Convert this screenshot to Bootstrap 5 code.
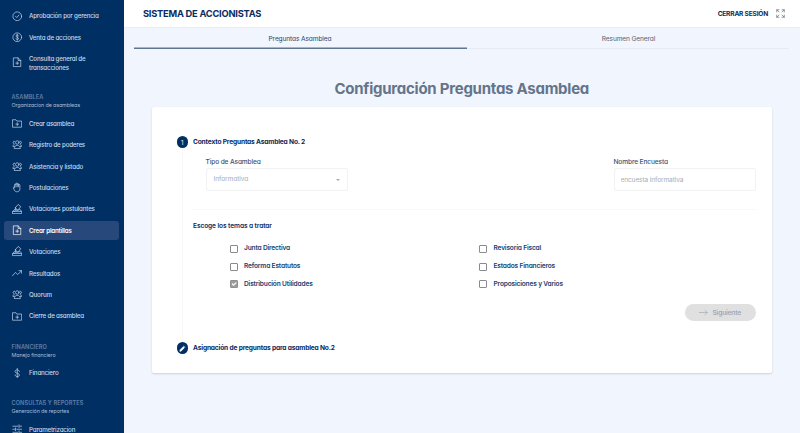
<!DOCTYPE html>
<html lang="es">
<head>
<meta charset="utf-8">
<meta name="viewport" content="width=device-width, initial-scale=1">
<title>Sistema de Accionistas</title>
<link href="https://cdn.jsdelivr.net/npm/bootstrap@5.3.0/dist/css/bootstrap.min.css" rel="stylesheet">
<style>
body{font-family:Inter,"Open Sans",sans-serif;font-feature-settings:"cv11";font-size:6.6px;line-height:9px;color:#0b2d5e;background:#f1f5fd}
svg{fill:none;stroke:currentColor;stroke-width:1.6;stroke-linecap:round;stroke-linejoin:round;flex:none}
.side{width:123.5px;background:#002f64;padding:5.2px 5px 0 4px}
.side .nav-link{height:19.4px;flex:none;margin:1px 0;padding:0 0 0 7.5px;gap:7px;color:#c9d8ea;font-size:6.2px;font-weight:500;border-radius:3px;letter-spacing:-.18px}
.side .nav-link.tall{height:27.2px}
.side .nav-link.active{background:#26487a;color:#fff;font-weight:600;letter-spacing:-.2px}
.side .nav-link svg{width:10.5px;height:10.5px}
.group-head{height:35.5px;padding:16px 0 0 7.5px;font-size:5.4px;line-height:8px;color:#a7bbd3;letter-spacing:-.13px}
.group-head b{display:block;font-size:5.6px;font-weight:600;letter-spacing:.1px;color:#6080a8;line-height:8px}
.topbar{height:28px;background:#fff;border-bottom:1px solid #e9eef4;padding:0 15px 0 19.5px}
.brand{font-size:9.3px;font-weight:700;letter-spacing:-.23px}
.logout{padding-top:1px;font-size:6.6px;font-weight:700;letter-spacing:-.2px}
.tabs{margin:0 0 0 10px;width:655px}
.tabs .nav-link{flex:0 0 322px;height:21px;padding:2px 0 0;font-size:6.6px;letter-spacing:-.12px;color:#566176;border-bottom:1px solid #e6eaf4;border-radius:0}
.tabs .nav-link:not(.active){padding-left:2px}
.tabs .nav-link.active{flex-basis:333px;color:#264575;border-bottom:1px solid #5f7693;box-shadow:inset 0 -.6px #5f7693}
.title{font-size:15px;line-height:20px;font-weight:700;letter-spacing:-.25px;color:#64748b;margin:30px 0 8px}
.panel{margin:0 28px;height:266px;border:0;border-radius:2px;box-shadow:0 1px 2px #c9d1dc;padding:29px 16px 0 25px}
.step{height:12px;gap:5px;font-weight:700;letter-spacing:-.15px;color:#09295a}
.dot{width:11.5px;height:11.5px;border-radius:50%;background:#002f64;color:#fff;font-size:6px;font-weight:400}
.step-body{height:194px;margin-left:5.5px;border-left:1px solid #f8f8fa;padding-left:10px}
.fields{padding:10px 0 0 12.5px}
.field{width:142.5px}
.field label{font-weight:500;letter-spacing:-.13px;color:#3c5377;line-height:9px;display:block}
.field .form-select,.field .form-control{height:23px;min-height:0;margin-top:1px;padding:0 7px;font-size:6.6px;line-height:21px;letter-spacing:-.08px;color:#a9adb4;background-color:#fff;border:1px solid #f1f2f4;border-radius:2px}
.field .form-control{padding-left:6px;letter-spacing:-.13px}
.field .form-select{background-image:none;display:flex;align-items:center;justify-content:space-between}
.caret{border:2px solid transparent;border-top:2.5px solid #a9a9ac;border-bottom:0}
.rule{border-top:1px solid #f8f8fa;margin-top:18px;padding-top:12px}
.ask{font-weight:600;line-height:9px;letter-spacing:-.1px}
.topics{margin-top:9px;padding-left:36.5px}
.topic.form-check{min-height:0;height:17.8px;margin:0;padding:0;gap:6.5px;width:249.5px;font-weight:600;letter-spacing:-.17px;color:#203f70}
.topic .form-check-input{width:8px;height:8px;margin:0;float:none;border:1px solid #8b8b8f;border-radius:1px}
.topic .form-check-input:checked{background-color:#9d9d9d;border-color:#8f8f8f;background-size:8px}
.actions{padding-top:10.5px}
.next{width:71.5px;height:17.5px;border:0;border-radius:9px;padding:0;font-size:6.8px;font-weight:500;letter-spacing:-.2px;gap:4px}
.next:disabled{background:#e0e0e0;color:#9aa2b0;opacity:1}
</style>
</head>
<body class="overflow-hidden">
<svg class="d-none">
<symbol id="people" viewBox="0 0 24 24"><circle cx="12" cy="8" r="4"/><path d="M6 5a3 3 0 0 0-1 6M18 5a3 3 0 0 1 1 6M5 21c0-9 14-9 14 0zM5 13c-2 0-3 2-3 4h3M19 13c2 0 3 2 3 4h-3"/></symbol>
<symbol id="vote" viewBox="0 0 24 24"><path d="M2 17h20v5H2zM2 17l4-5h2M22 17l-3-4h-2M8 8l6-7 6 5-6 8zM8 8l1 6h5M8 14l-2 3"/></symbol>
<symbol id="file" viewBox="0 0 24 24"><path d="M4 2h10l6 6v14H4zM14 2v6h6M12 11v6M9 14h6"/></symbol>
</svg>
<div class="d-flex vh-100">
<nav class="side nav flex-column flex-nowrap flex-shrink-0 overflow-hidden">
<a class="nav-link d-flex align-items-center"><svg viewBox="0 0 24 24"><circle cx="12" cy="12" r="10"/><path d="M8 12l3 3 5-6"/></svg>Aprobación por gerencia</a>
<a class="nav-link d-flex align-items-center"><svg viewBox="0 0 24 24"><circle cx="12" cy="12" r="10"/><path d="M15 9c0-3-6-3-6 0s6 3 6 6-6 3-6 0M12 5v14"/></svg>Venta de acciones</a>
<a class="nav-link tall d-flex align-items-center"><svg viewBox="0 0 24 24"><use href="#file"/></svg><span>Consulta general de<br>transacciones</span></a>
<div class="group-head flex-shrink-0"><b>ASAMBLEA</b>Organizacion de asambleas</div>
<a class="nav-link d-flex align-items-center"><svg viewBox="0 0 24 24"><path d="M2 4h7l2 3h11v14H2zM12 11v6M9 14h6"/></svg>Crear asamblea</a>
<a class="nav-link d-flex align-items-center"><svg viewBox="0 0 24 24"><use href="#people"/></svg>Registro de poderes</a>
<a class="nav-link d-flex align-items-center"><svg viewBox="0 0 24 24"><use href="#people"/></svg>Asistencia y listado</a>
<a class="nav-link d-flex align-items-center"><svg viewBox="0 0 24 24"><path d="M6 12V6c0-2 3-2 3 0V4c0-2 3-2 3 0v1c0-2 3-2 3 0v2c0-2 3-2 3 0v9c0 8-11 8-13 2l-2-5c0-2 2-2 3-1zM9 6v5M12 5v6M15 7v4"/></svg>Postulaciones</a>
<a class="nav-link d-flex align-items-center"><svg viewBox="0 0 24 24"><use href="#vote"/></svg>Votaciones postulantes</a>
<a class="nav-link active d-flex align-items-center"><svg viewBox="0 0 24 24"><use href="#file"/></svg>Crear plantillas</a>
<a class="nav-link d-flex align-items-center"><svg viewBox="0 0 24 24"><use href="#vote"/></svg>Votaciones</a>
<a class="nav-link d-flex align-items-center"><svg viewBox="0 0 24 24"><path d="M1 18l7-8 5 5 9-9M16 6h6v6"/></svg>Resultados</a>
<a class="nav-link d-flex align-items-center"><svg viewBox="0 0 24 24"><use href="#people"/></svg>Quorum</a>
<a class="nav-link d-flex align-items-center"><svg viewBox="0 0 24 24"><path d="M2 4h7l2 3h11v14H2zM12 11v6M9 14h6"/></svg>Cierre de asamblea</a>
<div class="group-head flex-shrink-0"><b>FINANCIERO</b>Manejo financiero</div>
<a class="nav-link d-flex align-items-center"><svg viewBox="0 0 24 24"><path d="M17 8c0-5-10-5-10 0s10 3 10 8-10 5-10 0M12 1v22"/></svg>Financiero</a>
<div class="group-head flex-shrink-0"><b>CONSULTAS Y REPORTES</b>Generación de reportes</div>
<a class="nav-link d-flex align-items-center"><svg viewBox="0 0 24 24"><path d="M2 5h11M18 5h4M16 2v6M2 12h4M11 12h11M8 9v6M2 19h11M18 19h4M16 16v6"/></svg>Parametrizacion</a>
</nav>
<main class="flex-grow-1">
<header class="topbar d-flex align-items-center justify-content-between">
<span class="brand">SISTEMA DE ACCIONISTAS</span>
<span class="d-flex align-items-center gap-2"><span class="logout">CERRAR SESIÓN</span><svg width="9" height="9" viewBox="0 0 24 24" color="#4c5b70"><path d="M2 8V2h6M2 2l6 6M16 2h6v6M22 2l-6 6M2 16v6h6M2 22l6-6M22 16v6h-6M22 22l-6-6"/></svg></span>
</header>
<div class="tabs nav flex-nowrap">
<a class="nav-link active d-flex align-items-center justify-content-center">Preguntas Asamblea</a>
<a class="nav-link d-flex align-items-center justify-content-center">Resumen General</a>
</div>
<h1 class="title text-center">Configuración Preguntas Asamblea</h1>
<section class="panel card">
<div class="step d-flex align-items-center"><span class="dot d-flex align-items-center justify-content-center">1</span><span>Contexto Preguntas Asamblea No. 2</span></div>
<div class="step-body">
<div class="fields d-flex justify-content-between">
<div class="field"><label>Tipo de Asamblea</label><div class="form-select"><span>Informativa</span><i class="caret"></i></div></div>
<div class="field"><label for="name">Nombre Encuesta</label><input id="name" class="form-control" value="encuesta informativa" disabled></div>
</div>
<div class="rule"><div class="ask">Escoge los temas a tratar</div>
<div class="topics d-flex flex-wrap">
<div class="topic form-check d-flex align-items-center"><input id="t1" class="form-check-input" type="checkbox"><label for="t1">Junta Directiva</label></div>
<div class="topic form-check d-flex align-items-center"><input id="t2" class="form-check-input" type="checkbox"><label for="t2">Revisoría Fiscal</label></div>
<div class="topic form-check d-flex align-items-center"><input id="t3" class="form-check-input" type="checkbox"><label for="t3">Reforma Estatutos</label></div>
<div class="topic form-check d-flex align-items-center"><input id="t4" class="form-check-input" type="checkbox"><label for="t4">Estados Financieros</label></div>
<div class="topic form-check d-flex align-items-center"><input id="t5" class="form-check-input" type="checkbox" checked><label for="t5">Distribución Utilidades</label></div>
<div class="topic form-check d-flex align-items-center"><input id="t6" class="form-check-input" type="checkbox"><label for="t6">Proposiciones y Varios</label></div>
</div></div>
<div class="actions d-flex justify-content-end"><button class="next btn d-flex align-items-center justify-content-center" disabled><svg width="9" height="9" viewBox="0 0 24 24"><path d="M1 12h21M16 6l6 6-6 6"/></svg>Siguiente</button></div>
</div>
<div class="step d-flex align-items-center"><span class="dot d-flex align-items-center justify-content-center"><svg width="7" height="7" viewBox="0 0 24 24"><path fill="#fff" d="M3 21v-4L15 5l4 4L7 21zM17 3l4 4"/></svg></span><span>Asignación de preguntas para asamblea No.2</span></div>
</section>
</main>
</div>
<script src="https://cdn.jsdelivr.net/npm/bootstrap@5.3.0/dist/js/bootstrap.bundle.min.js"></script>
</body>
</html>
